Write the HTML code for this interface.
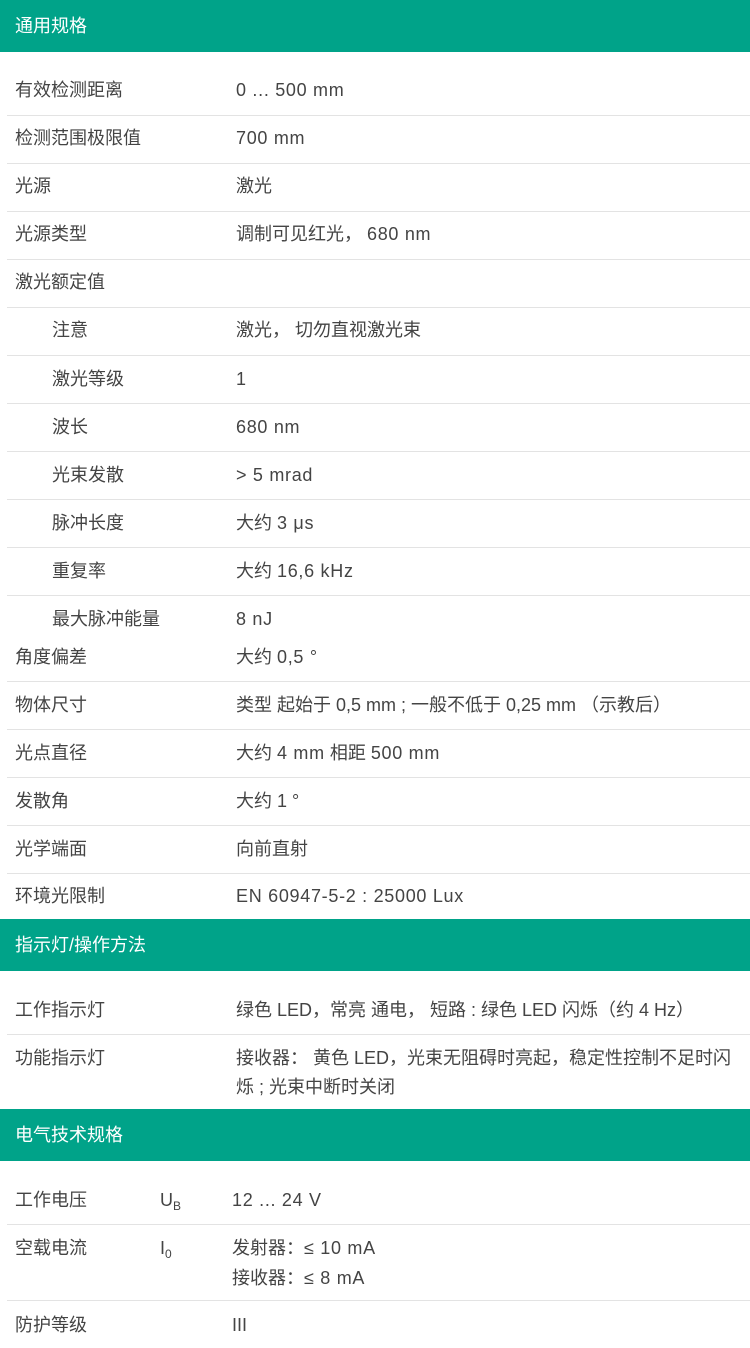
<!DOCTYPE html>
<html><head><meta charset="utf-8"><style>
body{margin:0;width:750px;height:1348px;background:#fff;position:relative;overflow:hidden;font-family:"Liberation Sans","Noto Sans CJK SC",sans-serif;color:#444;font-size:18px}
.h{position:absolute;left:0;width:750px;height:52px;background:#00a389;color:#fff}
.h span{position:absolute;left:15px;top:14px;line-height:24px}
.t{position:absolute;line-height:24px;white-space:nowrap}
.l{letter-spacing:0.7px}
.s{position:absolute;left:7px;right:0;height:1px;background:#e3e3e3}
sub{font-size:12px;vertical-align:-4px}
</style></head><body>
<div class="h" style="top:0"><span>通用规格</span></div>
<div class="t" style="left:15px;top:78px">有效检测距离</div><div class="t l" style="left:236px;top:78px">0 ... 500 mm</div><div class="s" style="top:115px"></div>
<div class="t" style="left:15px;top:126px">检测范围极限值</div><div class="t l" style="left:236px;top:126px">700 mm</div><div class="s" style="top:163px"></div>
<div class="t" style="left:15px;top:174px">光源</div><div class="t" style="left:236px;top:174px">激光</div><div class="s" style="top:211px"></div>
<div class="t" style="left:15px;top:222px">光源类型</div><div class="t" style="left:236px;top:222px">调制可见红光， <span class="l">680 nm</span></div><div class="s" style="top:259px"></div>
<div class="t" style="left:15px;top:270px">激光额定值</div><div class="s" style="top:307px"></div>
<div class="t" style="left:52px;top:318px">注意</div><div class="t" style="left:236px;top:318px">激光， 切勿直视激光束</div><div class="s" style="top:355px"></div>
<div class="t" style="left:52px;top:367px">激光等级</div><div class="t" style="left:236px;top:367px">1</div><div class="s" style="top:403px"></div>
<div class="t" style="left:52px;top:415px">波长</div><div class="t l" style="left:236px;top:415px">680 nm</div><div class="s" style="top:451px"></div>
<div class="t" style="left:52px;top:463px">光束发散</div><div class="t l" style="left:236px;top:463px">&gt; 5 mrad</div><div class="s" style="top:499px"></div>
<div class="t" style="left:52px;top:511px">脉冲长度</div><div class="t" style="left:236px;top:511px">大约 <span class="l">3 μs</span></div><div class="s" style="top:547px"></div>
<div class="t" style="left:52px;top:559px">重复率</div><div class="t" style="left:236px;top:559px">大约 <span class="l">16,6 kHz</span></div><div class="s" style="top:595px"></div>
<div class="t" style="left:52px;top:607px">最大脉冲能量</div><div class="t l" style="left:236px;top:607px">8 nJ</div>
<div class="t" style="left:15px;top:645px">角度偏差</div><div class="t" style="left:236px;top:645px">大约 <span class="l">0,5 °</span></div><div class="s" style="top:681px"></div>
<div class="t" style="left:15px;top:693px">物体尺寸</div><div class="t" style="left:236px;top:693px">类型 起始于 0,5 mm ; 一般不低于 0,25 mm （示教后）</div><div class="s" style="top:729px"></div>
<div class="t" style="left:15px;top:741px">光点直径</div><div class="t" style="left:236px;top:741px">大约 <span class="l">4 mm</span> 相距 <span class="l">500 mm</span></div><div class="s" style="top:777px"></div>
<div class="t" style="left:15px;top:789px">发散角</div><div class="t" style="left:236px;top:789px">大约 1 °</div><div class="s" style="top:825px"></div>
<div class="t" style="left:15px;top:837px">光学端面</div><div class="t" style="left:236px;top:837px">向前直射</div><div class="s" style="top:873px"></div>
<div class="t" style="left:15px;top:884px">环境光限制</div><div class="t l" style="left:236px;top:884px">EN 60947-5-2 : 25000 Lux</div>
<div class="h" style="top:919px"><span>指示灯/操作方法</span></div>
<div class="t" style="left:15px;top:998px">工作指示灯</div><div class="t" style="left:236px;top:998px">绿色 LED，常亮 通电， 短路 : 绿色 LED 闪烁（约 4 Hz）</div><div class="s" style="top:1034px"></div>
<div class="t" style="left:15px;top:1046px">功能指示灯</div><div class="t" style="left:236px;top:1046px">接收器： 黄色 LED，光束无阻碍时亮起，稳定性控制不足时闪</div><div class="t" style="left:236px;top:1075px">烁 ; 光束中断时关闭</div>
<div class="h" style="top:1109px"><span>电气技术规格</span></div>
<div class="t" style="left:15px;top:1188px">工作电压</div><div class="t" style="left:160px;top:1188px">U<sub>B</sub></div><div class="t l" style="left:232px;top:1188px">12 ... 24 V</div><div class="s" style="top:1224px"></div>
<div class="t" style="left:15px;top:1236px">空载电流</div><div class="t" style="left:160px;top:1236px">I<sub>0</sub></div><div class="t" style="left:232px;top:1236px">发射器：<span class="l">≤ 10 mA</span></div><div class="t" style="left:232px;top:1266px">接收器：<span class="l">≤ 8 mA</span></div><div class="s" style="top:1300px"></div>
<div class="t" style="left:15px;top:1313px">防护等级</div><div class="t" style="left:232px;top:1313px">III</div>
</body></html>
